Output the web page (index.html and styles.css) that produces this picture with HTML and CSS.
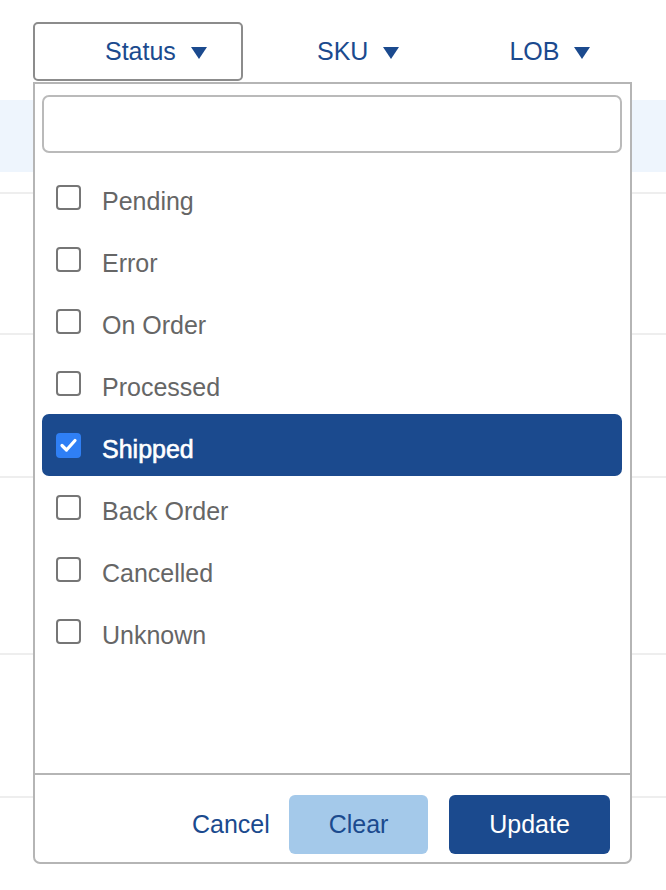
FILE: index.html
```html
<!DOCTYPE html>
<html>
<head>
<meta charset="utf-8">
<link rel="stylesheet" href="styles.css">
</head>
<body>
<div class="page">
  <div class="toolbar">
    <button class="filter filter-open"><span>Status</span><svg class="caret" width="16" height="12" viewBox="0 0 16 12"><polygon points="0,0 16,0 8,12"/></svg></button>
    <button class="filter filter-sku"><span>SKU</span><svg class="caret" width="16" height="12" viewBox="0 0 16 12"><polygon points="0,0 16,0 8,12"/></svg></button>
    <button class="filter filter-lob"><span>LOB</span><svg class="caret" width="16" height="12" viewBox="0 0 16 12"><polygon points="0,0 16,0 8,12"/></svg></button>
  </div>
  <div class="table">
    <div class="row row-hl"></div>
    <div class="row r1"></div>
    <div class="row r2"></div>
    <div class="row r3"></div>
    <div class="row r4"></div>
    <div class="row r5"></div>
  </div>

  <div class="panel">
    <div class="search-wrap"><input class="search" type="text"></div>
    <ul class="list">
      <li class="item"><span class="box"></span><span class="label">Pending</span></li>
      <li class="item"><span class="box"></span><span class="label">Error</span></li>
      <li class="item"><span class="box"></span><span class="label">On Order</span></li>
      <li class="item"><span class="box"></span><span class="label">Processed</span></li>
      <li class="item item-on"><span class="box box-on"><svg width="25" height="25" viewBox="0 0 25 25"><path d="M6 12.5 L10.5 17 L19 7.5" fill="none" stroke="#fff" stroke-width="3.2" stroke-linecap="round" stroke-linejoin="round"/></svg></span><span class="label">Shipped</span></li>
      <li class="item"><span class="box"></span><span class="label">Back Order</span></li>
      <li class="item"><span class="box"></span><span class="label">Cancelled</span></li>
      <li class="item"><span class="box"></span><span class="label">Unknown</span></li>
    </ul>
    <div class="footer">
      <button class="btn btn-cancel">Cancel</button>
      <button class="btn btn-clear">Clear</button>
      <button class="btn btn-update">Update</button>
    </div>
  </div>
</div>
</body>
</html>
```

FILE: styles.css
```css
* { box-sizing: border-box; }
html, body { margin: 0; padding: 0; background: #fff; }
body { font-family: "Liberation Sans", Arial, sans-serif; }
.page { position: relative; width: 666px; height: 890px; overflow: hidden; }

.toolbar { height: 100px; display: flex; align-items: flex-start; padding-top: 22px; }
.filter {
  font-family: "Liberation Sans", Arial, sans-serif;
  font-size: 25px; color: #1b4a8e; background: none; border: 2px solid transparent;
  height: 59px; display: flex; align-items: center; gap: 15px; padding: 0; cursor: pointer;
}
.filter span { line-height: 1; }
.caret { fill: #1b4a8e; margin-top: 3px; }
.filter-open { margin-left: 33px; width: 210px; padding-left: 70px; border-color: #8c8c8c; border-radius: 5px; }
.filter-sku { margin-left: 72px; }
.filter-lob { margin-left: 106px; }

.table { display: flex; flex-direction: column; }
.row { border-bottom: 2px solid #eeeeee; }
.row-hl { height: 72px; background: #eef5fd; border-bottom: none; }
.r1 { height: 22px; }
.r2 { height: 141px; }
.r3 { height: 143px; }
.r4 { height: 177px; }
.r5 { height: 143px; }

.panel {
  position: absolute; left: 33px; top: 82px; width: 599px; height: 782px;
  border: 2px solid #b5b5b5; border-radius: 0 0 7px 7px; background: #fff;
  display: flex; flex-direction: column;
}
.search-wrap { padding: 11px 8px 0 7px; }
.search {
  display: block; width: 100%; height: 58px; border: 2px solid #bababa; border-radius: 7px;
  background: #fff; outline: none; font-size: 20px;
}
.list { list-style: none; margin: 13px 8px 0 7px; padding: 0; flex: 1; }
.item {
  height: 62px; display: flex; align-items: center; padding-left: 14px; gap: 21px;
  border-radius: 7px; color: #666; font-size: 25px;
}
.label { line-height: 1; padding-top: 9px; }
.box {
  width: 25px; height: 25px; border: 2px solid #767676; border-radius: 4px; flex: none; background: #fff;
}
.item-on { background: #1b4a8e; color: #fff; -webkit-text-stroke: 0.6px #fff; }
.box-on { background: #2f7ff5; border-color: #2f7ff5; position: relative; }
.box-on svg { position: absolute; left: -2px; top: -2px; }

.footer {
  border-top: 2px solid #b5b5b5; height: 89px; display: flex; justify-content: flex-end;
  align-items: flex-start; padding: 20px 20px 0 0; gap: 20px;
}
.btn {
  font-family: "Liberation Sans", Arial, sans-serif; font-size: 25px; height: 59px;
  border: none; border-radius: 6px; cursor: pointer; padding: 0;
}
.btn-cancel { background: none; color: #1b4a8e; width: 77px; }
.btn-clear { background: #a4c9ea; color: #1b4a8e; width: 139px; }
.btn-update { background: #1b4a8e; color: #fff; width: 161px; margin-left: 1px; }
```
